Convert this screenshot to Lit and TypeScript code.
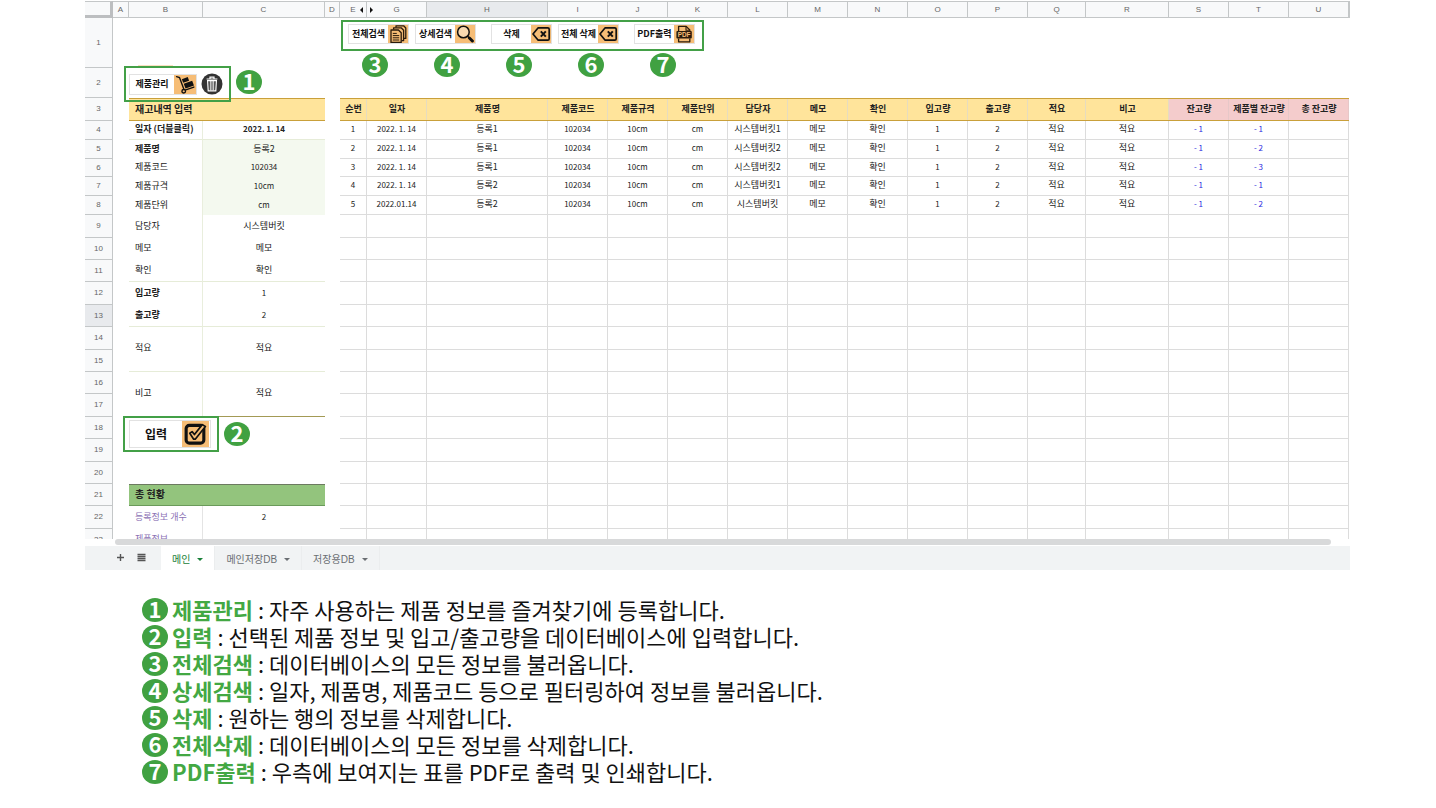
import { LitElement, html, css, svg, nothing } from "lit";
import { customElement, property } from "lit/decorators.js";
import { classMap } from "lit/directives/class-map.js";

const icons: Record<string, unknown> = {
  docs: svg`<g fill="none" stroke="#2a1b0c" stroke-width="1.3" stroke-linejoin="round">
      <path d="M8 3.6V1.8h7.6l2.2 2.2v10.4H16" />
      <path d="M5.6 5.6V3.8h7.6l2.4 2.4v10.4h-2" />
      <path d="M3 6h7.4l2.8 2.8v9.6H3z" />
      <path d="M4.8 9.4h4M4.8 11.6h6.4M4.8 13.8h6.4M4.8 16h6.4" stroke-width="1" /></g>`,
  search: svg`<circle cx="8.4" cy="8" r="5.8" fill="#f9d9b0" stroke="#111" stroke-width="1.5" />
      <path d="M12.6 12.2l1.8 1.8" stroke="#111" stroke-width="1.6" />
      <path d="M14.4 14l3 3" stroke="#111" stroke-width="3" stroke-linecap="round" />`,
  erase: svg`<path d="M7.2 3.8h9.6q1.4 0 1.4 1.4v9.6q0 1.4-1.4 1.4H7.2L2 10z" fill="none" stroke="#111" stroke-width="1.7" stroke-linejoin="round" />
      <path d="M9.8 7.4l5 5.2M14.8 7.4l-5 5.2" stroke="#111" stroke-width="2" />`,
  pdf: svg`<path d="M4.6 7V2.4h7.6l3.6 3.6v1M4.6 14.4v3.4h11.2v-3.4" fill="none" stroke="#2a1b0c" stroke-width="1.3" stroke-linejoin="round" />
      <path d="M12 2.6v3.6h3.6" fill="none" stroke="#2a1b0c" stroke-width="1.1" />
      <rect x="2.4" y="7" width="15.4" height="7.4" rx="1" fill="#2a1b0c" />
      <text x="10.1" y="13" text-anchor="middle" font-family="Liberation Sans, sans-serif" font-size="6.4" font-weight="700" fill="#f6bd76">PDF</text>`,
  cart: svg`<path d="M2 2.6l2.8.8 4.4 11.8" fill="none" stroke="#111" stroke-width="1.3" stroke-linecap="round" />
      <path d="M9.4 15.6l9-3.2" stroke="#111" stroke-width="1.3" stroke-linecap="round" />
      <circle cx="8.8" cy="16.4" r="1.7" fill="#f6bd76" stroke="#111" stroke-width="1.3" />
      <path d="M7 5l5.6-2 1.3 3.4-5.6 2z" fill="#111" />
      <path d="M8.8 9.4l8-2.9 1.7 4.4-8 2.9z" fill="#111" />`,
  check: svg`<rect x="2.8" y="3.4" width="13.6" height="13.6" rx="2.4" fill="none" stroke="#111" stroke-width="2.4" />
      <path d="M5.6 9.4l1.8-1.2 1.8 2.2 6-7.6 2.4 1.4-7.8 9.8H8.6z" fill="#f6bd76" stroke="#111" stroke-width="1.3" stroke-linejoin="round" />`,
};

@customElement("image-button")
class ImageButton extends LitElement {
  @property() icon = "";
  @property() label = "";
  @property() size = "";

  static styles = css`
    :host {
      display: block;
    }
    .button {
      display: flex;
      align-items: center;
      width: 61px;
      height: 20px;
      padding: 0;
      border: 1px solid #e2e2e2;
      background: #fff;
      color: #111;
      font: 700 9px/12px "Noto Sans CJK KR", sans-serif;
      white-space: nowrap;
      cursor: pointer;
    }
    .button.medium {
      width: 68px;
      height: 21px;
    }
    .button.large {
      width: 82px;
      height: 28px;
      font-size: 12px;
    }
    .text {
      flex: 1;
      text-align: center;
    }
    .tile {
      flex: none;
      width: 20px;
      height: 100%;
      background: #f6bd76;
    }
    .medium .tile {
      width: 22px;
    }
    .large .tile {
      width: 27px;
      margin-right: 1px;
    }
    svg {
      display: block;
      width: 100%;
      height: 100%;
    }
  `;

  render() {
    const large = this.size === "large";
    return html`<button
      type="button"
      class=${classMap({ button: true, medium: this.size === "medium", large })}
    >
      <span class="text">${this.label}</span>
      <span class="tile">
        <svg viewBox=${large ? "0 0 20 20" : "1 1 18 18"} aria-hidden="true">${icons[this.icon]}</svg>
      </span>
    </button>`;
  }
}

@customElement("number-badge")
class NumberBadge extends LitElement {
  @property({ type: Number }) value = 0;

  static styles = css`
    :host {
      display: flex;
      flex: none;
      align-items: center;
      justify-content: center;
      box-sizing: border-box;
      width: 26px;
      height: 24px;
      padding-bottom: 4px;
      border-radius: 50%;
      background: #40a141;
      color: #fff;
      font: 700 22px/20px "Noto Sans CJK KR", sans-serif;
    }
  `;

  render() {
    return html`${this.value}`;
  }
}

const columns: [string, number][] = [
  ["A", 16], ["B", 74], ["C", 122], ["D", 15], ["E", 27], ["G", 60], ["H", 121],
  ["I", 60], ["J", 60], ["K", 60], ["L", 60], ["M", 60], ["N", 60], ["O", 60],
  ["P", 60], ["Q", 58], ["R", 83], ["S", 60], ["T", 60], ["U", 60], ["", 1],
];

const rowHeights = [
  50, 30, 23, 19, 19, 18, 19, 19, 23, 22, 22, 23, 22, 23, 22, 22, 23, 22, 23, 22, 22, 23, 22,
];

const headings = [
  "순번", "일자", "제품명", "제품코드", "제품규격", "제품단위", "담당자", "메모", "확인",
  "입고량", "출고량", "적요", "비고", "잔고량", "제품별 잔고량", "총 잔고량",
];

const record = (no: string, date: string, name: string, owner: string, left: string) => [
  no, date, name, "102034", "10cm", "cm", owner, "메모", "확인", "1", "2", "적요", "적요", "- 1", left, "",
];

const records = [
  record("1", "2022. 1. 14", "등록1", "시스템버킷1", "- 1"),
  record("2", "2022. 1. 14", "등록1", "시스템버킷2", "- 2"),
  record("3", "2022. 1. 14", "등록1", "시스템버킷2", "- 3"),
  record("4", "2022. 1. 14", "등록2", "시스템버킷1", "- 1"),
  record("5", "2022.01.14", "등록2", "시스템버킷", "- 2"),
];

interface Field {
  label: string;
  value: string;
  strong?: boolean;
  strongValue?: boolean;
  tinted?: boolean;
  ruled?: boolean;
  span?: number;
  kind?: string;
}

const fields: Record<number, Field> = {
  4: { label: "일자 (더블클릭)", value: "2022. 1. 14", strong: true, strongValue: true, ruled: true },
  5: { label: "제품명", value: "등록2", strong: true, tinted: true },
  6: { label: "제품코드", value: "102034", tinted: true },
  7: { label: "제품규격", value: "10cm", tinted: true },
  8: { label: "제품단위", value: "cm", tinted: true },
  9: { label: "담당자", value: "시스템버킷" },
  10: { label: "메모", value: "메모" },
  11: { label: "확인", value: "확인", ruled: true },
  12: { label: "입고량", value: "1", strong: true },
  13: { label: "출고량", value: "2", strong: true, ruled: true },
  14: { label: "적요", value: "적요", span: 2, ruled: true },
  16: { label: "비고", value: "적요", span: 2, kind: "last" },
  22: { label: "등록정보 개수", value: "2", kind: "stat" },
  23: { label: "제품정보", value: "", kind: "stat" },
};

const notes = [
  ["제품관리", "자주 사용하는 제품 정보를 즐겨찾기에 등록합니다."],
  ["입력", "선택된 제품 정보 및 입고/출고량을 데이터베이스에 입력합니다."],
  ["전체검색", "데이터베이스의 모든 정보를 불러옵니다."],
  ["상세검색", "일자, 제품명, 제품코드 등으로 필터링하여 정보를 불러옵니다."],
  ["삭제", "원하는 행의 정보를 삭제합니다."],
  ["전체삭제", "데이터베이스의 모든 정보를 삭제합니다."],
  ["PDF출력", "우측에 보여지는 표를 PDF로 출력 및 인쇄합니다."],
];

const tabs = ["메인", "메인저장DB", "저장용DB"];

const latin = (text: string) => /^[\x20-\x7e]+$/.test(text);

@customElement("app-root")
export class AppRoot extends LitElement {
  static styles = css`
    :host {
      display: block;
      background: #fff;
      color: #222;
      font-family: "Noto Sans CJK KR", sans-serif;
    }
    .page {
      padding: 0 86px 0 85px;
    }
    .viewport {
      height: 539px;
      padding-top: 1px;
      box-sizing: border-box;
      overflow: hidden;
    }
    .grid {
      width: 100%;
      table-layout: fixed;
      border-collapse: separate;
      border-spacing: 0;
      font-size: 9px;
      line-height: 12px;
    }
    th,
    td {
      box-sizing: border-box;
      padding: 0 0 2px;
      text-align: center;
      vertical-align: middle;
      font-weight: 400;
      white-space: nowrap;
    }
    .letters {
      height: 17px;
    }
    .letters th,
    .rownum {
      padding: 0;
      background: #f8f9fa;
      color: #666;
      font: 8px/12px "Liberation Sans", sans-serif;
      border: solid #c4c7c8;
      border-width: 0 1px 1px 0;
    }
    .letters th {
      border-top-width: 1px;
    }
    .letters .corner {
      border-right: 3px solid #bcbec0;
      border-bottom: 3px solid #bcbec0;
    }
    .letters .active,
    .rownum.active {
      background: #e8eaed;
    }
    .hidden-mark {
      display: flex;
      align-items: center;
      justify-content: center;
      position: relative;
    }
    .arrow {
      position: absolute;
      border: 3px solid transparent;
    }
    .arrow.prev {
      right: 3px;
      border-left: 0;
      border-right-color: #111;
    }
    .arrow.next {
      left: 3px;
      border-right: 0;
      border-left-color: #111;
    }
    .anchor {
      position: relative;
    }
    .num {
      font-size: 8px;
    }
    .cell {
      border-right: 1px solid #dcdcdc;
      border-bottom: 1px solid #dcdcdc;
    }
    .heading {
      background: #ffe49b;
      border: solid #c9a03a;
      border-width: 1px 0;
      color: #222;
      font-weight: 700;
      box-shadow: inset -1px 0 #e6dcbf;
    }
    .heading.total {
      background: #f4cccc;
      box-shadow: inset -1px 0 #e6c8c8;
    }
    .balance {
      color: #2a2ae0;
    }
    .label,
    .title {
      padding-left: 6px;
      text-align: left;
    }
    .title {
      background: #ffe49b;
      border: solid #c9a03a;
      border-width: 1px 0;
      font-size: 10px;
      font-weight: 700;
    }
    .title.green {
      background: #93c47d;
      border-color: #6a9a5a;
      border-top-color: #6c7a60;
    }
    .label {
      border-right: 1px solid #e9eedd;
    }
    .strong {
      font-weight: 700;
    }
    .tinted {
      background: #f4f9ef;
    }
    .ruled {
      border-bottom: 1px solid #e6ecd8;
    }
    .last {
      border-bottom: 1px solid #a39a55;
    }
    .label.stat {
      color: #8a70b4;
      border-right-color: #e4e4e4;
    }
    .streak {
      position: absolute;
      left: 9px;
      bottom: 2px;
      width: 35px;
      height: 1px;
      background: #fbe0c0;
    }
    .callout {
      position: absolute;
      z-index: 1;
      display: flex;
      align-items: center;
      gap: 5px;
    }
    .frame {
      display: flex;
      align-items: center;
      box-sizing: border-box;
      border: 2px solid #43a047;
    }
    .callout.manage {
      left: -5px;
      top: -2px;
    }
    .manage .frame {
      width: 107px;
      height: 36px;
      padding-left: 3px;
      gap: 4px;
    }
    .manage number-badge {
      margin-bottom: 4px;
    }
    .callout.submit {
      left: -6px;
      top: -1px;
    }
    .submit .frame {
      width: 96px;
      height: 36px;
      padding-left: 4px;
    }
    .trash {
      width: 22px;
      height: 22px;
      padding: 0;
      border: 0;
      background: none;
      cursor: pointer;
    }
    .trash svg,
    .tool svg {
      display: block;
      width: 100%;
      height: 100%;
    }
    .callout.toolbar {
      left: 1px;
      top: 2px;
      width: 363px;
      flex-direction: column;
      align-items: stretch;
      gap: 2px;
    }
    .toolbar .frame {
      height: 31px;
      padding: 0 5px 3px;
      gap: 15px;
    }
    .group {
      display: flex;
      gap: 6px;
    }
    .badges {
      display: flex;
      justify-content: space-between;
      padding: 0 28px 0 21px;
    }
    .track {
      height: 7px;
      padding: 0 19px 0 30px;
    }
    .thumb {
      height: 6px;
      border-radius: 3px;
      background: #d8d9da;
    }
    .tabbar {
      display: flex;
      align-items: stretch;
      height: 24px;
      padding-left: 25px;
      background: #f1f3f4;
    }
    .tool {
      width: 21px;
      padding: 5px 4px 6px;
      border: 0;
      background: none;
      cursor: pointer;
    }
    .tab {
      display: flex;
      align-items: center;
      gap: 7px;
      padding: 3px 11px 0;
      border: 0;
      border-right: 1px solid #ebedee;
      background: none;
      color: #6a6e72;
      font: 10px/14px "Liberation Sans", "Noto Sans CJK KR", sans-serif;
      cursor: pointer;
    }
    .tab.current {
      margin-left: 9px;
      background: #fff;
      color: #188038;
    }
    .caret {
      border: 3px solid transparent;
      border-top-color: currentColor;
      border-bottom: 0;
    }
    .notes {
      margin: 26px 0 0;
      padding: 0 0 0 57px;
      list-style: none;
      color: #111;
      font-size: 22px;
      line-height: 27px;
    }
    .note {
      display: flex;
      align-items: center;
      gap: 4px;
    }
    .term {
      color: #43a843;
      font-weight: 700;
    }
  `;

  private toolbar() {
    return html`<div class="callout toolbar">
      <div class="frame">
        <div class="group">
          <image-button icon="docs" label="전체검색"></image-button>
          <image-button icon="search" label="상세검색"></image-button>
        </div>
        <div class="group">
          <image-button icon="erase" label="삭제"></image-button>
          <image-button icon="erase" label="전체 삭제"></image-button>
        </div>
        <image-button icon="pdf" label="PDF출력"></image-button>
      </div>
      <div class="badges">${[3, 4, 5, 6, 7].map((n) => html`<number-badge .value=${n}></number-badge>`)}</div>
    </div>`;
  }

  private manage() {
    return html`<div class="callout manage">
      <div class="frame">
        <image-button icon="cart" label="제품관리" size="medium"></image-button>
        <button type="button" class="trash" aria-label="삭제">
          <svg viewBox="0 0 22 22">
            <circle cx="11" cy="11" r="10.5" fill="#333" />
            <path d="M5.6 6h10.8M9 5.6V4.2h4v1.4" fill="none" stroke="#fff" stroke-width="1.2" />
            <path d="M6.6 7.6h8.8l-.6 10.2H7.2z" fill="none" stroke="#fff" stroke-width="1.2" />
            <path d="M9.3 8v9.4M11 8v9.4M12.7 8v9.4" stroke="#fff" stroke-width=".9" />
          </svg>
        </button>
      </div>
      <number-badge .value=${1}></number-badge>
    </div>`;
  }

  private submit() {
    return html`<div class="callout submit">
      <div class="frame"><image-button icon="check" label="입력" size="large"></image-button></div>
      <number-badge .value=${2}></number-badge>
    </div>`;
  }

  private formCells(row: number) {
    if (row === 1) return html`<td class="anchor"><span class="streak"></span></td><td></td>`;
    if (row === 2) return html`<td class="anchor">${this.manage()}</td><td></td>`;
    if (row === 3) return html`<th class="title" colspan="2">재고내역 입력</th>`;
    if (row === 18) return html`<td class="anchor">${this.submit()}</td><td></td>`;
    if (row === 21) return html`<th class="title green" colspan="2">총 현황</th>`;
    if (row === 15 || row === 17) return nothing;
    const f = fields[row];
    if (!f) return html`<td></td><td></td>`;
    const shared = { ruled: !!f.ruled, last: f.kind === "last", stat: f.kind === "stat" };
    return html`<th
        scope="row"
        rowspan=${f.span ?? 1}
        class=${classMap({ label: true, strong: !!f.strong, ...shared })}
      >${f.label}</th>
      <td
        rowspan=${f.span ?? 1}
        class=${classMap({ strong: !!f.strongValue, tinted: !!f.tinted, num: latin(f.value), ...shared })}
      >${f.value}</td>`;
  }

  private dataCells(row: number) {
    if (row === 1) return html`<td class="anchor" colspan="16">${this.toolbar()}</td>`;
    if (row === 2) return html`<td colspan="16"></td>`;
    if (row === 3) {
      return headings.map((h, i) => html`<th scope="col" class=${classMap({ heading: true, total: i > 12 })}>${h}</th>`);
    }
    const values = records[row - 4];
    return headings.map((_, i) => {
      const text = values ? values[i] : "";
      return html`<td class=${classMap({ cell: true, num: latin(text), balance: i > 12 })}>${text}</td>`;
    });
  }

  private letter(name: string) {
    if (name === "E") return html`<div class="hidden-mark">E<span class="arrow prev"></span></div>`;
    if (name === "G") return html`<div class="hidden-mark"><span class="arrow next"></span>G</div>`;
    return name;
  }

  render() {
    return html`<main class="page">
      <section class="sheet">
        <div class="viewport">
          <table class="grid">
            <colgroup>
              <col style="width:28px" />
              ${columns.map(([, w]) => html`<col style="width:${w}px" />`)}
            </colgroup>
            <thead>
              <tr class="letters">
                <th class="corner"></th>
                ${columns.map(([n]) => html`<th class=${classMap({ active: n === "H" })}>${this.letter(n)}</th>`)}
              </tr>
            </thead>
            <tbody>
              ${rowHeights.map((h, i) => {
                const row = i + 1;
                return html`<tr style="height:${h}px">
                  <th scope="row" class=${classMap({ rownum: true, active: row === 13 })}>${row}</th>
                  <td></td>
                  ${this.formCells(row)}
                  <td></td>
                  ${this.dataCells(row)}
                  <td></td>
                </tr>`;
              })}
            </tbody>
          </table>
        </div>
        <div class="track"><div class="thumb"></div></div>
        <nav class="tabbar">
          <button type="button" class="tool" aria-label="시트 추가">
            <svg viewBox="0 0 13 13"><path d="M6.5 3v7M3 6.5h7" stroke="#555" stroke-width="1.4" /></svg>
          </button>
          <button type="button" class="tool" aria-label="모든 시트">
            <svg viewBox="0 0 13 13"><path d="M2.5 3.5h8M2.5 5.5h8M2.5 7.5h8M2.5 9.5h8" stroke="#555" stroke-width="1.4" /></svg>
          </button>
          ${tabs.map(
            (t, i) => html`<button type="button" class=${classMap({ tab: true, current: i === 0 })}>
              ${t}<span class="caret"></span>
            </button>`,
          )}
        </nav>
      </section>
      <ol class="notes">
        ${notes.map(
          ([term, text], i) => html`<li class="note">
            <number-badge .value=${i + 1}></number-badge>
            <span><b class="term">${term}</b> : ${text}</span>
          </li>`,
        )}
      </ol>
    </main>`;
  }
}
